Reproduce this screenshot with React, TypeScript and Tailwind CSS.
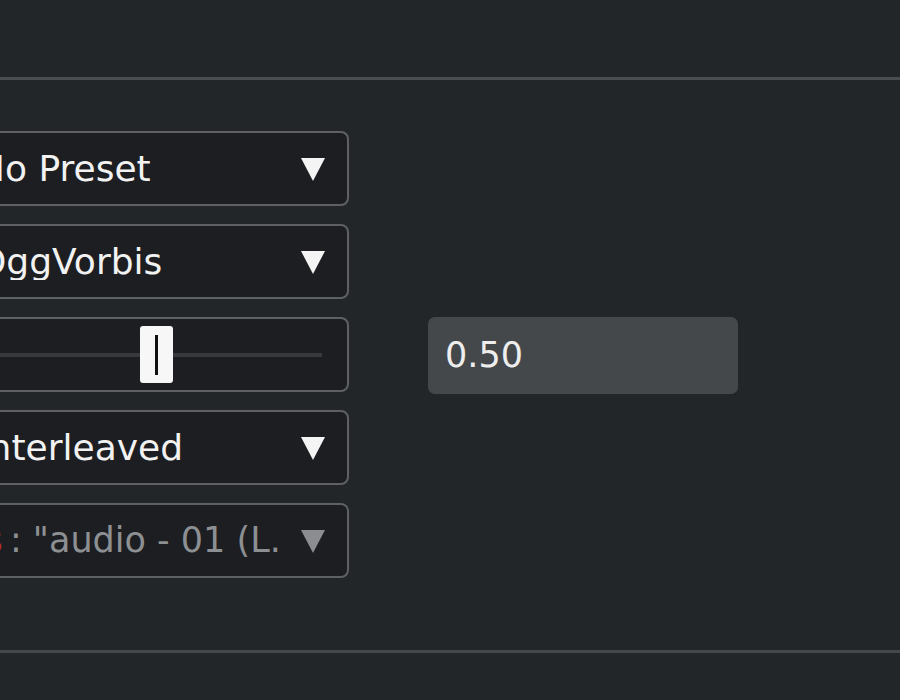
import React from "react";

function Arrow({ disabled }: { disabled?: boolean }) {
  return (
    <svg width="24" height="24" viewBox="0 0 24 24" className="shrink-0">
      <polygon points="0,1 24,1 12,24" fill={disabled ? "#8b8d90" : "#f4f4f4"} />
    </svg>
  );
}

function Select({ children, disabled }: { children: React.ReactNode; disabled?: boolean }) {
  return (
    <div className="h-[75px] rounded-[8px] border-2 border-[#5e6063] bg-[#1d1e21] flex items-center pl-[36px] pr-[22px]">
      <div
        className={
          "flex-1 whitespace-nowrap overflow-hidden " +
          (disabled ? "text-[#8d9093] text-[35px]" : "text-[#f2f2f2]")
        }
      >
        {children}
      </div>
      <Arrow disabled={disabled} />
    </div>
  );
}

export default function App() {
  return (
    <div
      className="w-[900px] h-[700px] bg-[#232629] overflow-hidden flex flex-col text-[36px] leading-none"
      style={{ fontFamily: '"DejaVu Sans", "Noto Sans", sans-serif' }}
    >
      <div className="h-[77px] shrink-0" />
      <div className="h-[3px] shrink-0 bg-[#4a4d50]" />
      <div className="flex-1 flex pt-[51px]">
        <div className="ml-[-60px] w-[409px] shrink-0 flex flex-col gap-[18px]">
          <Select>No Preset</Select>
          <Select>OggVorbis</Select>
          <div className="relative h-[75px] rounded-[8px] border-2 border-[#5e6063] bg-[#1d1e21] flex items-center pl-[25px] pr-[25px]">
            <div className="w-full h-[4px] bg-[#38393c]" />
            <div className="absolute left-[198px] top-[7px] w-[33px] h-[57px] rounded-[3px] bg-[#f7f7f7] flex justify-center items-center">
              <div className="w-[3px] h-[40px] bg-[#111]" />
            </div>
          </div>
          <Select>Interleaved</Select>
          <Select disabled>
            <span className="ml-[-85px] text-[#b8302a]">Tracks</span>
            <span className="ml-[-4px]"> : "audio - 01 (L.</span>
          </Select>
        </div>
        <div className="ml-[79px] mt-[186px] w-[310px] h-[77px] rounded-[7px] bg-[#45484b] flex items-center pl-[17px] text-[#eeeeee] text-[35px]">
          0.50
        </div>
      </div>
      <div className="h-[3px] shrink-0 bg-[#45484b]" />
      <div className="h-[47px] shrink-0" />
    </div>
  );
}
